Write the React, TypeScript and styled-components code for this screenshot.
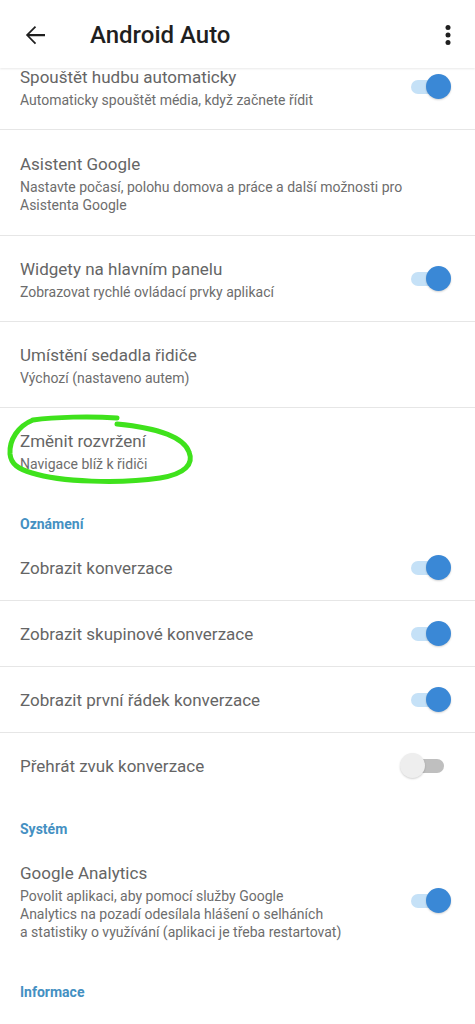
import React from 'react';
import styled, { createGlobalStyle } from 'styled-components';

type Item = {
  title: string;
  lines?: string[];
  toggle?: 'on' | 'off';
  circled?: boolean;
  last?: boolean;
};

type Section = {
  category?: string;
  items: Item[];
};

const sections: Section[] = [
  {
    items: [
      {
        title: 'Spouštět hudbu automaticky',
        lines: ['Automaticky spouštět média, když začnete řídit'],
        toggle: 'on',
      },
      {
        title: 'Asistent Google',
        lines: ['Nastavte počasí, polohu domova a práce a další možnosti pro', 'Asistenta Google'],
      },
      {
        title: 'Widgety na hlavním panelu',
        lines: ['Zobrazovat rychlé ovládací prvky aplikací'],
        toggle: 'on',
      },
      {
        title: 'Umístění sedadla řidiče',
        lines: ['Výchozí (nastaveno autem)'],
      },
      {
        title: 'Změnit rozvržení',
        lines: ['Navigace blíž k řidiči'],
        circled: true,
        last: true,
      },
    ],
  },
  {
    category: 'Oznámení',
    items: [
      { title: 'Zobrazit konverzace', toggle: 'on' },
      { title: 'Zobrazit skupinové konverzace', toggle: 'on' },
      { title: 'Zobrazit první řádek konverzace', toggle: 'on' },
      { title: 'Přehrát zvuk konverzace', toggle: 'off', last: true },
    ],
  },
  {
    category: 'Systém',
    items: [
      {
        title: 'Google Analytics',
        lines: [
          'Povolit aplikaci, aby pomocí služby Google',
          'Analytics na pozadí odesílala hlášení o selháních',
          'a statistiky o využívání (aplikaci je třeba restartovat)',
        ],
        toggle: 'on',
        last: true,
      },
    ],
  },
  { category: 'Informace', items: [] },
];

const App: React.FC = () => {
  return (
    <>
      <GlobalStyle />
      <StyledPage>
        <StyledHeader>
          <StyledIconButton>
            <svg width="30" height="30" viewBox="0 0 24 24">
              <path
                fill="#1f1f1f"
                d="M20 11.1H7.5l5.4-5.4-1-1L4.7 12l7.2 7.3 1-1-5.4-5.4H20z"
              />
            </svg>
          </StyledIconButton>
          <StyledTitle>Android Auto</StyledTitle>
          <StyledIconButton>
            <svg width="30" height="30" viewBox="0 0 24 24">
              <circle cx="12" cy="6" r="2" fill="#1f1f1f" />
              <circle cx="12" cy="12" r="2" fill="#1f1f1f" />
              <circle cx="12" cy="18" r="2" fill="#1f1f1f" />
            </svg>
          </StyledIconButton>
        </StyledHeader>
        <StyledList>
          {sections.map((section, si) => (
            // eslint-disable-next-line react/no-array-index-key
            <div key={si}>
              {section.category && <StyledCategory>{section.category}</StyledCategory>}
              {section.items.map((item) => (
                <StyledRow
                  key={item.title}
                  last={!!item.last}
                  tall={!!item.lines && item.lines.length === 2}
                >
                  <StyledText>
                    <StyledRowTitle>{item.title}</StyledRowTitle>
                    {item.lines && (
                      <StyledSummary>
                        {item.lines.map((line, i) => (
                          // eslint-disable-next-line react/no-array-index-key
                          <span key={i}>{line}</span>
                        ))}
                      </StyledSummary>
                    )}
                  </StyledText>
                  {item.toggle && (
                    <StyledSwitch>
                      <StyledTrack on={item.toggle === 'on'} />
                      <StyledThumb on={item.toggle === 'on'} />
                    </StyledSwitch>
                  )}
                  {item.circled && (
                    <StyledScribble width="200" height="84" viewBox="0 0 200 84">
                      <path
                        d="M33 12 C18 18 9 32 10 46 C11 56 18 61 32 65 C60 74 120 76 160 70 C185 66 194 56 189 44 C184 30 160 20 117 16 M117 10 C90 8 55 9 33 12"
                        fill="none"
                        stroke="#3fe21c"
                        strokeWidth="5"
                        strokeLinecap="round"
                        strokeLinejoin="round"
                      />
                    </StyledScribble>
                  )}
                </StyledRow>
              ))}
            </div>
          ))}
        </StyledList>
      </StyledPage>
    </>
  );
};
export default App;

const blue = '#3a88d6';

const GlobalStyle = createGlobalStyle`
  body {
    margin: 0;
    background: #ffffff;
    font-family: Roboto, "Noto Sans", sans-serif;
  }
`;

const StyledPage = styled.div`
  width: 475px;
  height: 1024px;
  overflow: hidden;
  background: #ffffff;
`;

const StyledHeader = styled.div`
  position: relative;
  z-index: 2;
  height: 68px;
  display: flex;
  align-items: center;
  padding: 2px 12px 0 20px;
  box-sizing: border-box;
  background: #ffffff;
  box-shadow: 0 1px 2px rgba(0, 0, 0, 0.09);
`;

const StyledIconButton = styled.div`
  width: 30px;
  height: 30px;
  display: flex;
  align-items: center;
  justify-content: center;
`;

const StyledTitle = styled.div`
  flex: 1;
  margin-left: 40px;
  font-size: 24px;
  font-weight: 500;
  color: #1f1f1f;
`;

const StyledList = styled.div`
  margin-top: -24px;
`;

const StyledCategory = styled.div`
  padding: 20px 20px 1px;
  line-height: 20px;
  font-size: 14px;
  font-weight: 700;
  color: #4490c2;
`;

const StyledRow = styled.div<{ last: boolean; tall: boolean }>`
  position: relative;
  display: flex;
  align-items: center;
  padding: ${(p) => (p.tall ? '22px 24px 21px 20px' : '21px 24px 20px 20px')};
  border-bottom: 1px solid ${(p) => (p.last ? 'transparent' : '#e6e6e6')};
`;

const StyledText = styled.div`
  flex: 1;
  min-width: 0;
  display: flex;
  flex-direction: column;
`;

const StyledRowTitle = styled.div`
  font-size: 17px;
  line-height: 24px;
  color: #656565;
`;

const StyledSummary = styled.div`
  margin-top: 2px;
  font-size: 14px;
  line-height: 18px;
  color: #6d6d6d;
  display: flex;
  flex-direction: column;
  white-space: nowrap;
`;

const StyledSwitch = styled.div`
  position: relative;
  flex-shrink: 0;
  width: 51px;
  height: 24px;
`;

const StyledTrack = styled.div<{ on: boolean }>`
  position: absolute;
  left: 11px;
  top: 5px;
  width: 33px;
  height: 14px;
  border-radius: 7px;
  background: ${(p) => (p.on ? '#c5e1f7' : '#bfbfbf')};
`;

const StyledThumb = styled.div<{ on: boolean }>`
  position: absolute;
  top: -1px;
  left: ${(p) => (p.on ? '26px' : '0')};
  width: 25px;
  height: 25px;
  border-radius: 50%;
  background: ${(p) => (p.on ? blue : '#eeeeee')};
  box-shadow: 0 1px 2px rgba(0, 0, 0, 0.18);
`;

const StyledScribble = styled.svg`
  position: absolute;
  left: 0;
  top: 0;
  pointer-events: none;
`;
